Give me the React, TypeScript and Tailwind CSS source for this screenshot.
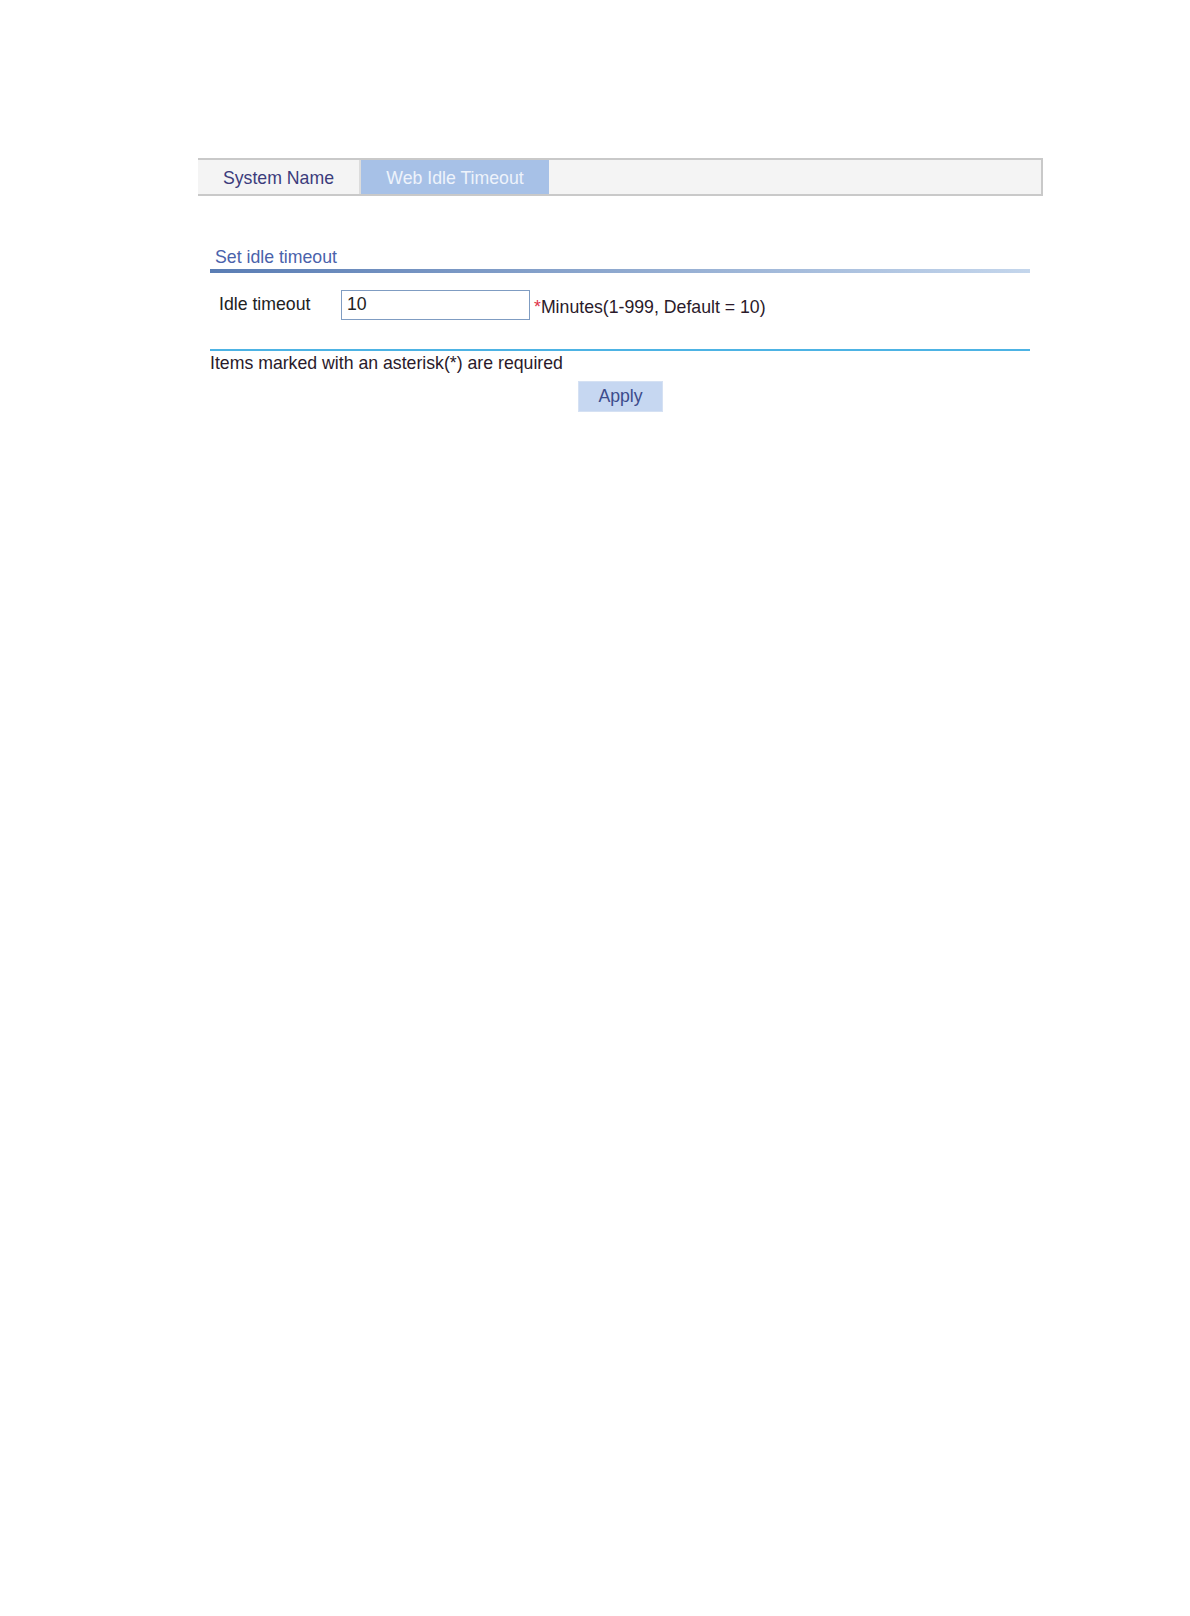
import React from "react";

export default function App() {
  const font = { fontFamily: '"Liberation Sans", Arial, sans-serif' };
  return (
    <div className="min-h-[1616px] w-[1190px] bg-white pt-[158px] pl-[198px]" style={font}>
      <div className="w-[845px]">
        {/* Tab bar */}
        <div className="flex h-[38px] border-t-2 border-b-2 border-r-2 border-[#c9c9c9] bg-[#f4f4f4]">
          <div className="flex w-[163px] items-center justify-center border-r-2 border-[#dcdcdc] pt-[2px] text-[17.7px] text-[#3c3c7c]">
            System Name
          </div>
          <div className="flex w-[188px] items-center justify-center bg-[#a7c1e7] pt-[2px] text-[17.7px] text-[#eef3fb]">
            Web Idle Timeout
          </div>
        </div>

        {/* Content */}
        <div className="ml-[12px] w-[820px]">
          <div className="mt-[51px] pl-[5px] text-[17.7px] leading-[20px] text-[#4a62ab]">Set idle timeout</div>
          <div className="mt-[2px] h-[4px] bg-gradient-to-r from-[#5a7db4] via-[#8fa9cf] to-[#c4d6ec]" />

          <div className="mt-[16px] flex items-center">
            <div className="w-[131px] pl-[9px] pb-[1px] text-[17.7px] text-[#222222]">Idle timeout</div>
            <div className="flex h-[30px] w-[189px] items-center border border-[#7f9cc2] bg-white pl-[5px] text-[17.7px] text-[#222222]">
              10
            </div>
            <div className="ml-[4px] mt-[5px] text-[17.7px] text-[#2a1a2a]">
              <span className="text-[#e0344a]">*</span>Minutes(1-999, Default = 10)
            </div>
          </div>

          <div className="mt-[28px] h-[2px] bg-[#4db3e4]" />
          <div className="mt-[2px] text-[17.7px] leading-[20px] text-[#2a1a2a]">
            Items marked with an asterisk(*) are required
          </div>
          <div className="mt-[8px] ml-[368px] flex h-[31px] w-[85px] items-center justify-center border border-[#d5e1f3] bg-[#c6d7f1] pt-[1px] text-[17.7px] text-[#3c4c8c]">
            Apply
          </div>
        </div>
      </div>
    </div>
  );
}
